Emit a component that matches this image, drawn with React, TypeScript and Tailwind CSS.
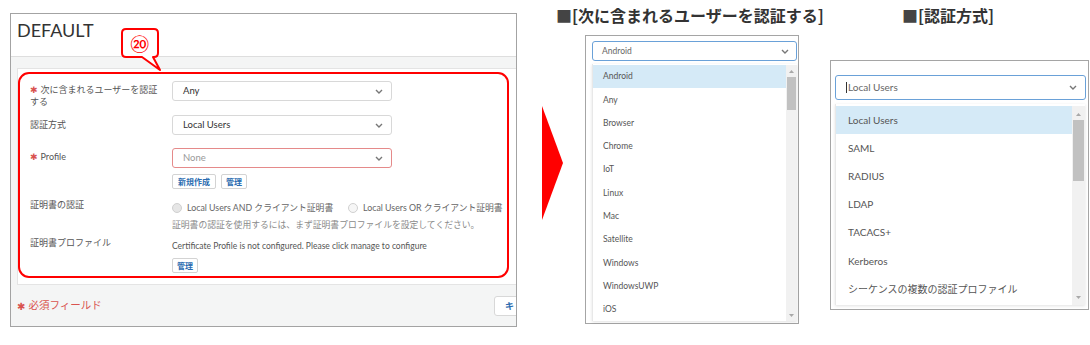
import React from "react";

const Chevron = ({ color = "#777" }: { color?: string }) => (
  <svg width="8" height="5" viewBox="0 0 8 5" className="shrink-0">
    <polyline points="1,1 4,4 7,1" fill="none" stroke={color} strokeWidth="1.4" />
  </svg>
);

const UpTri = () => (
  <svg width="5" height="3" viewBox="0 0 5 3"><polygon points="0,3 2.5,0 5,3" fill="#a8a8a8" /></svg>
);
const DownTri = () => (
  <svg width="5" height="3" viewBox="0 0 5 3"><polygon points="0,0 2.5,3 5,0" fill="#a8a8a8" /></svg>
);

const Star = () => (
  <span className="inline-block align-top text-[#d9534f] text-[9px] leading-[12px] mr-[3px] font-['DejaVu_Sans',sans-serif]">✱</span>
);

const Btn = ({ children, w }: { children: React.ReactNode; w: string }) => (
  <div className={`${w} h-[15px] border border-[#d3d3d3] rounded-[2px] bg-white flex items-center justify-center text-[8px] font-bold text-[#2b6cb0]`}>
    {children}
  </div>
);

const Radio = () => (
  <span className="inline-block w-[10px] h-[10px] rounded-full border border-[#d0d0d0] bg-[#e6e6e6] shrink-0" />
);
const RadioEmpty = () => (
  <span className="inline-block w-[10px] h-[10px] rounded-full border border-[#d0d0d0] bg-[#f6f6f6] shrink-0" />
);

function MainPanel() {
  return (
    <div className="ml-[10px] mt-[13px] w-[507px] h-[314px] border border-[#a3a3a3] flex flex-col overflow-hidden relative shrink-0">
      <div className="h-[43px] shrink-0 bg-white border-b border-[#dedede] pl-[6px] pt-[5px] text-[18px] leading-[22px] text-[#333]">
        DEFAULT
      </div>
      <div className="flex-1 bg-[#f4f5f5] pl-[6px] pt-[11px]">
        <div className="w-[505px] bg-white border border-[#e4e4e4] pt-[3px] pb-[6px]">
          <div className="w-[491px] border-2 border-[#ff0000] rounded-[11px] pt-[7px] pb-[3px] pl-[10px] text-[#555]">
            {/* row 1 */}
            <div className="flex items-start">
              <div className="w-[142px] pr-[12px] pt-[3px] text-[9px] leading-[12px]">
                <Star />次に含まれるユーザーを認証する
              </div>
              <div className="w-[220px] h-[20px] border border-[#d8d8d8] rounded-[3px] flex items-center justify-between pl-[10px] pr-[8px] text-[9.5px] text-[#333]">
                <span>Any</span>
                <Chevron />
              </div>
            </div>
            {/* row 2 */}
            <div className="flex items-start mt-[7px]">
              <div className="w-[142px] pt-[4px] text-[9px] leading-[12px]">認証方式</div>
              <div className="w-[220px] h-[20px] border border-[#d8d8d8] rounded-[3px] flex items-center justify-between pl-[10px] pr-[8px] text-[9.5px] text-[#333]">
                <span>Local Users</span>
                <Chevron />
              </div>
            </div>
            {/* row 3 */}
            <div className="flex items-start mt-[13px]">
              <div className="w-[142px] pt-[3px] text-[9px] leading-[12px]">
                <Star />Profile
              </div>
              <div className="flex flex-col">
                <div className="w-[220px] h-[20px] border border-[#e58a8a] rounded-[3px] flex items-center justify-between pl-[10px] pr-[8px] text-[9.5px] text-[#999]">
                  <span>None</span>
                  <Chevron />
                </div>
                <div className="flex gap-[5px] mt-[6px]">
                  <Btn w="w-[44px]">新規作成</Btn>
                  <Btn w="w-[26px]">管理</Btn>
                </div>
              </div>
            </div>
            {/* row 4 */}
            <div className="flex items-start mt-[10px]">
              <div className="w-[142px] text-[9px] leading-[12px]">証明書の認証</div>
              <div className="flex flex-col">
                <div className="flex items-center pt-[3px] h-[15px] text-[8.8px] leading-[12px] text-[#666]">
                  <Radio />
                  <span className="ml-[5px] w-[161px]">Local Users AND クライアント証明書</span>
                  <RadioEmpty />
                  <span className="ml-[5px] whitespace-nowrap">Local Users OR クライアント証明書</span>
                </div>
                <div className="mt-[5px] text-[8.8px] leading-[12px] text-[#8a8a8a] whitespace-nowrap">
                  証明書の認証を使用するには、まず証明書プロファイルを設定してください。
                </div>
              </div>
            </div>
            {/* row 5 */}
            <div className="flex items-start mt-[6px]">
              <div className="w-[142px] text-[9px] leading-[12px]">証明書プロファイル</div>
              <div className="flex flex-col">
                <div className="pt-[3px] text-[8.5px] leading-[12px] text-[#555] whitespace-nowrap">
                  Certificate Profile is not configured. Please click manage to configure
                </div>
                <div className="mt-[6px]">
                  <Btn w="w-[26px]">管理</Btn>
                </div>
              </div>
            </div>
          </div>
        </div>
        {/* footer */}
        <div className="flex items-center mt-[11px] w-[520px]">
          <div className="w-[477px] shrink-0 text-[10.5px] text-[#d9534f] flex items-center">
            <span className="mr-[3px] text-[10px] font-['DejaVu_Sans',sans-serif]">✱</span>必須フィールド
          </div>
          <div className="w-[40px] h-[20px] pl-[10px] border border-[#d8d8d8] rounded-[3px] bg-white flex items-center text-[9px] font-bold text-[#2b6cb0] shrink-0 overflow-hidden">
            キ
          </div>
        </div>
      </div>
      {/* callout annotation */}
      <div className="absolute left-[109px] top-[13px] w-[45px] h-[46px]">
        <svg width="45" height="46" viewBox="0 0 45 46" className="absolute left-0 top-0">
          <path
            d="M6 2 H34 Q38 2 38 6 V26 Q38 30 34 30 H33 L40 43 L22 30 H6 Q2 30 2 26 V6 Q2 2 6 2 Z"
            fill="#fff"
            stroke="#ff0000"
            strokeWidth="2"
            strokeLinejoin="round"
          />
        </svg>
        <div className="absolute left-[2px] top-[2px] w-[36px] h-[28px] flex items-center justify-center text-[17px] leading-none text-[#ff0000]">
          ⑳
        </div>
      </div>
    </div>
  );
}

const androidItems = ["Android", "Any", "Browser", "Chrome", "IoT", "Linux", "Mac", "Satellite", "Windows", "WindowsUWP", "iOS"];
const authItems = ["Local Users", "SAML", "RADIUS", "LDAP", "TACACS+", "Kerberos", "シーケンスの複数の認証プロファイル"];

function Panel2() {
  return (
    <div className="flex flex-col ml-[-7px] w-[274px] shrink-0">
      <div className="mt-[5px] h-[20px] text-[16px] leading-[20px] font-bold text-[#333] font-['Noto_Sans_CJK_JP',sans-serif] whitespace-nowrap">
        <span className="text-[#444]">■</span>[次に含まれるユーザーを認証する]
      </div>
      <div className="ml-[29px] mt-[10px] w-[214px] h-[289px] border border-[#a5a5a5] bg-white pl-[6px] pt-[5px]">
        <div className="w-[205px] h-[20px] border border-[#6aa1d8] rounded-[3px] flex items-center justify-between pl-[9px] pr-[7px] text-[8.5px] text-[#666]">
          <span>Android</span>
          <Chevron />
        </div>
        <div className="mt-[3px] w-[205px] h-[257px] border-l border-[#e8e8e8] shadow-[0_1px_3px_rgba(0,0,0,0.12)] flex pt-[1px]">
          <div className="flex-1 flex flex-col">
            {androidItems.map((it, i) => (
              <div
                key={it}
                className={`h-[23.3px] shrink-0 flex items-center pl-[10px] text-[8.5px] text-[#555] ${i === 0 ? "bg-[#d5eaf7]" : ""}`}
              >
                {it}
              </div>
            ))}
          </div>
          <div className="w-[11px] bg-[#f1f1f1] flex flex-col items-center pt-[5px]">
            <UpTri />
            <div className="mt-[4px] w-[9px] h-[33px] bg-[#c1c1c1]" />
            <div className="flex-1" />
            <div className="mb-[4px]"><DownTri /></div>
          </div>
        </div>
      </div>
    </div>
  );
}

function Panel3() {
  return (
    <div className="flex flex-col shrink-0">
      <div className="ml-[72px] mt-[5px] h-[20px] text-[16px] leading-[20px] font-bold text-[#333] font-['Noto_Sans_CJK_JP',sans-serif] whitespace-nowrap">
        <span className="text-[#444]">■</span>[認証方式]
      </div>
      <div className="mt-[35px] w-[259px] h-[250px] border border-[#a5a5a5] bg-white pl-[4px] pt-[14px]">
        <div className="w-[251px] h-[25px] border border-[#6aa1d8] rounded-[3px] flex items-center justify-between pl-[10px] pr-[8px] text-[10px] text-[#666]">
          <span className="flex items-center">
            <span className="inline-block w-[1px] h-[11px] bg-[#333] mr-[1px]" />
            Local Users
          </span>
          <Chevron />
        </div>
        <div className="mt-[4px] w-[250px] h-[201px] border-l border-[#e8e8e8] shadow-[0_1px_3px_rgba(0,0,0,0.12)] flex pt-[2px]">
          <div className="flex-1 flex flex-col">
            {authItems.map((it, i) => (
              <div
                key={it}
                className={`h-[28.2px] shrink-0 flex items-center pl-[12px] text-[10px] text-[#555] ${i === 0 ? "bg-[#d5eaf7]" : ""}`}
              >
                {it}
              </div>
            ))}
          </div>
          <div className="w-[13px] bg-[#f1f1f1] flex flex-col items-center pt-[7px]">
            <UpTri />
            <div className="mt-[4px] w-[11px] h-[61px] bg-[#c1c1c1]" />
            <div className="flex-1" />
            <div className="mb-[6px]"><DownTri /></div>
          </div>
        </div>
      </div>
    </div>
  );
}

export default function App() {
  return (
    <div className="w-[1090px] h-[345px] bg-white flex items-start overflow-hidden font-['Lato','Noto_Sans_CJK_JP',sans-serif]">
      <MainPanel />
      <svg width="21" height="114" viewBox="0 0 21 114" className="ml-[25px] mt-[106px] shrink-0">
        <polygon points="0,0 21,57 0,114" fill="#ff0000" />
      </svg>
      <Panel2 />
      <Panel3 />
    </div>
  );
}
